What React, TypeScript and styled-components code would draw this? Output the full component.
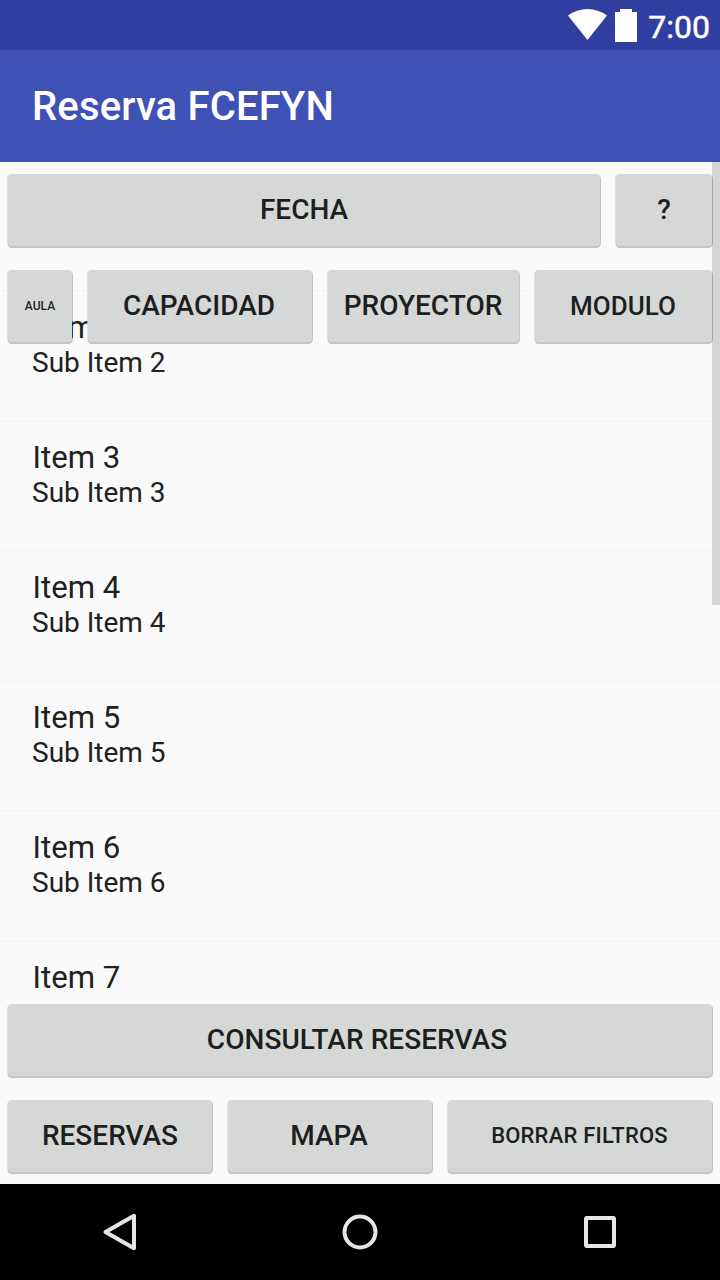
import React from "react";
import styled, { createGlobalStyle } from "styled-components";

const GlobalStyle = createGlobalStyle`
  *, *::before, *::after { box-sizing: border-box; }
  html, body { margin: 0; padding: 0; background: #fafafa; }
  body { font-family: Roboto, sans-serif; color: #212121; overflow: hidden; }
`;

const Screen = styled.div`
  display: flex;
  flex-direction: column;
  width: 720px;
  height: 1280px;
  background: #fafafa;
`;

const StatusBar = styled.header`
  flex: none;
  display: flex;
  justify-content: flex-end;
  height: 50px;
  padding-right: 10px;
  background: #303f9f;
  svg { display: block; }
`;

const Clock = styled.span`
  margin-left: 8px;
  font-size: 32px;
  line-height: 54px;
  color: #fff;
  -webkit-text-stroke: 0.5px #fff;
`;

const AppBar = styled.div`
  flex: none;
  display: flex;
  align-items: center;
  height: 112px;
  padding: 2px 0 0 32px;
  background: #3f51b5;
`;

const Title = styled.h1`
  margin: 0;
  font-size: 40px;
  font-weight: 500;
  letter-spacing: 0.16px;
  line-height: 48px;
  color: #fff;
`;

const Content = styled.main`
  position: relative;
  flex: 1;
  min-height: 0;
  overflow: hidden;
`;

const List = styled.ul`
  list-style: none;
  margin: 0;
  padding: 128px 0 0;
`;

const ListItem = styled.li`
  height: 130px;
  padding: 17px 32px 0;
  border-top: 2px solid #f6f6f6;
`;

const ItemTitle = styled.div`
  padding-left: 0.5px;
  font-size: 31.2px;
  line-height: 38px;
`;

const ItemSubtitle = styled.div`
  font-size: 28px;
  line-height: 31px;
`;

const ScrollThumb = styled.div`
  position: absolute;
  top: 0;
  right: 0;
  width: 8px;
  height: 443px;
  background: #d5d5d5;
`;

const Controls = styled.div`
  position: absolute;
  inset: 0;
  display: flex;
  flex-direction: column;
  justify-content: space-between;
  padding: 12px 8px;
`;

const ButtonGroup = styled.div`
  display: flex;
  flex-direction: column;
  gap: 24px;
`;

const ButtonRow = styled.div<{ $columns: string }>`
  display: grid;
  grid-template-columns: ${(p) => p.$columns};
  column-gap: 16px;
  height: 72px;
`;

const RaisedButton = styled.button<{ $size?: number; $tracking?: number; $inset?: number }>`
  display: flex;
  align-items: center;
  justify-content: center;
  min-width: 0;
  margin: 0;
  padding: 0 ${(p) => p.$inset ?? 1}px 0 0;
  border: 0;
  border-radius: 4px;
  background: #d6d8d7;
  box-shadow: 0 2px 0 0 #c4c5c4, 1px 1px 0 0 rgba(0, 0, 0, 0.2),
    -0.7px 0.5px 0 0 #d6d8d7, 0 2px 1px 0 rgba(0, 0, 0, 0.15);
  font-family: inherit;
  font-size: ${(p) => p.$size ?? 28}px;
  font-weight: 500;
  letter-spacing: ${(p) => p.$tracking ?? 0}px;
  line-height: 1;
  white-space: nowrap;
  color: #1d1e1e;
`;

const NavBar = styled.nav`
  flex: none;
  display: grid;
  grid-template-columns: repeat(3, 240px);
  place-items: center;
  height: 96px;
  background: #000;
  svg { display: block; }
`;

const items = [2, 3, 4, 5, 6, 7];

export default function App() {
  return (
    <Screen>
      <GlobalStyle />
      <StatusBar>
        <svg width="40" height="50" viewBox="0 0 40 50">
          <path d="M0 15.5Q9 9 19.5 9T39 15.5L19.5 40Z" fill="#fff" />
        </svg>
        <svg width="32" height="50" viewBox="0 0 32 50">
          <path d="M7 12h5V9h12v3h5v30H7Z" fill="#fff" />
        </svg>
        <Clock>7:00</Clock>
      </StatusBar>
      <AppBar>
        <Title>Reserva FCEFYN</Title>
      </AppBar>
      <Content>
        <List>
          {items.map((n) => (
            <ListItem key={n}>
              <ItemTitle>Item {n}</ItemTitle>
              {n < 7 && <ItemSubtitle>Sub Item {n}</ItemSubtitle>}
            </ListItem>
          ))}
        </List>
        <ScrollThumb />
        <Controls>
          <ButtonGroup>
            <ButtonRow $columns="592px 1fr">
              <RaisedButton $inset={0}>FECHA</RaisedButton>
              <RaisedButton $inset={0}>?</RaisedButton>
            </ButtonRow>
            <ButtonRow $columns="64px 224px 191px 1fr">
              <RaisedButton $size={12} $inset={0}>AULA</RaisedButton>
              <RaisedButton $inset={2}>CAPACIDAD</RaisedButton>
              <RaisedButton>PROYECTOR</RaisedButton>
              <RaisedButton $size={26}>MODULO</RaisedButton>
            </ButtonRow>
          </ButtonGroup>
          <ButtonGroup>
            <ButtonRow $columns="1fr">
              <RaisedButton $inset={6} $tracking={0.05}>CONSULTAR RESERVAS</RaisedButton>
            </ButtonRow>
            <ButtonRow $columns="204px 204px 1fr">
              <RaisedButton $inset={0}>RESERVAS</RaisedButton>
              <RaisedButton $inset={2}>MAPA</RaisedButton>
              <RaisedButton $size={22} $tracking={0.2}>BORRAR FILTROS</RaisedButton>
            </ButtonRow>
          </ButtonGroup>
        </Controls>
      </Content>
      <NavBar>
        <svg width="40" height="40" viewBox="0 0 40 40" fill="none" stroke="#e6e6e6" strokeWidth="4" strokeLinejoin="round">
          <path d="M34 3.8V36.2L5.5 20Z" />
        </svg>
        <svg width="40" height="40" viewBox="0 0 40 40" fill="none" stroke="#e6e6e6" strokeWidth="4">
          <circle cx="20" cy="20" r="15.5" />
        </svg>
        <svg width="40" height="40" viewBox="0 0 40 40" fill="none" stroke="#e6e6e6" strokeWidth="4">
          <rect x="6" y="6" width="28" height="28" rx="1" />
        </svg>
      </NavBar>
    </Screen>
  );
}
